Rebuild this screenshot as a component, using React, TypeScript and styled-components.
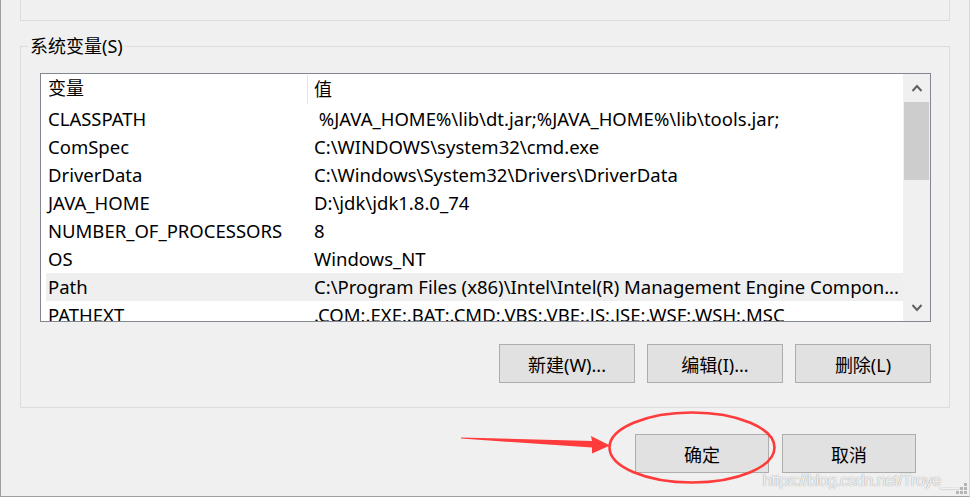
import React from "react";
import styled, { createGlobalStyle } from "styled-components";

const GlobalStyle = createGlobalStyle`
  html, body {
    margin: 0;
    padding: 0;
    background: #f0f0f0;
  }
  body {
    font-family: "Noto Sans", "Noto Sans CJK SC", sans-serif;
  }
`;

const Window = styled.div`
  position: relative;
  width: 970px;
  height: 497px;
  box-sizing: border-box;
  background: #f0f0f0;
  border-left: 1px solid #a0a0a0;
  border-right: 1px solid #dadada;
  border-bottom: 1px solid #a0a0a0;
  padding-left: 19px;
  overflow: hidden;
  display: flex;
  flex-direction: column;
  font-size: 18px;
  color: #000;
`;

const PrevGroup = styled.div`
  width: 930px;
  height: 21px;
  box-sizing: border-box;
  border: 1px solid #dcdcdc;
  border-top: none;
`;

const GroupBox = styled.fieldset`
  width: 930px;
  box-sizing: border-box;
  margin: 14px 0 0 0;
  padding: 0;
  border: 1px solid #dcdcdc;
  min-inline-size: 0;
`;

const Legend = styled.legend`
  margin-left: 7px;
  padding: 0 2px;
  line-height: 22px;
  font-size: 18px;
`;

const GroupBody = styled.div`
  padding: 16px 18px 24px 19px;
  display: flex;
  flex-direction: column;
`;

const ListBox = styled.div`
  width: 891px;
  height: 249px;
  box-sizing: border-box;
  border: 1px solid #828790;
  background: #fff;
  display: flex;
  overflow: hidden;
`;

const ListContent = styled.div`
  flex: 1;
  display: flex;
  flex-direction: column;
  overflow: hidden;
`;

const HeaderRow = styled.div`
  display: grid;
  grid-template-columns: 266px 1fr;
  height: 31px;
  flex-shrink: 0;
  line-height: 31px;
`;

const HeaderCell = styled.div<{ $divider?: boolean }>`
  padding-left: ${(p) => (p.$divider ? "6px" : "7px")};
  border-left: ${(p) => (p.$divider ? "1px solid #e5e5e5" : "none")};
  margin: ${(p) => (p.$divider ? "1px 0 1px 0" : "0")};
  line-height: 29px;
`;

const Row = styled.div<{ $selected?: boolean }>`
  display: grid;
  grid-template-columns: 261px 1fr;
  height: 28px;
  flex-shrink: 0;
  margin-left: 5px;
  line-height: 28px;
  font-size: 18.5px;
  background: ${(p) => (p.$selected ? "#efefef" : "transparent")};
`;

const Cell = styled.div`
  padding-left: 2px;
  white-space: pre;
  overflow: hidden;
`;

const ValueCell = styled.div`
  padding-left: 7px;
  white-space: pre;
  overflow: hidden;
  text-overflow: ellipsis;
`;

const ScrollBar = styled.div`
  width: 27px;
  flex-shrink: 0;
  background: #f0f0f0;
  display: flex;
  flex-direction: column;
`;

const ScrollArrow = styled.div`
  height: 27px;
  display: flex;
  align-items: center;
  justify-content: center;
  flex-shrink: 0;
`;

const ScrollTrack = styled.div`
  flex: 1;
  padding: 1px 1px 0 1px;
`;

const ScrollThumb = styled.div`
  height: 78px;
  background: #cdcdcd;
`;

const ButtonRow = styled.div<{ $gap: number }>`
  display: flex;
  justify-content: flex-end;
  gap: ${(p) => p.$gap}px;
`;

const ListButtons = styled(ButtonRow)`
  margin-top: 22px;
`;

const DialogButtons = styled(ButtonRow)`
  margin-top: 26px;
  padding-right: 53px;
`;

const Button = styled.button<{ $w: number }>`
  width: ${(p) => p.$w}px;
  height: 39px;
  box-sizing: border-box;
  background: #e1e1e1;
  border: 1px solid #adadad;
  border-radius: 0;
  font-family: inherit;
  font-size: 18px;
  color: #000;
  padding: 0;
`;

const Watermark = styled.div`
  position: absolute;
  right: 11px;
  bottom: 5px;
  font-family: "Liberation Sans", Arial, sans-serif;
  font-size: 17px;
  letter-spacing: -0.8px;
  color: rgba(255, 255, 255, 0.9);
  text-shadow: 0 0 1px rgba(110, 110, 110, 0.9);
  pointer-events: none;
`;

const Grip = styled.svg`
  position: absolute;
  right: 1px;
  bottom: 1px;
`;

const Annotation = styled.svg`
  position: absolute;
  left: -1px;
  top: 0;
  pointer-events: none;
`;

const rows: [string, string][] = [
  ["CLASSPATH", " %JAVA_HOME%\\lib\\dt.jar;%JAVA_HOME%\\lib\\tools.jar;"],
  ["ComSpec", "C:\\WINDOWS\\system32\\cmd.exe"],
  ["DriverData", "C:\\Windows\\System32\\Drivers\\DriverData"],
  ["JAVA_HOME", "D:\\jdk\\jdk1.8.0_74"],
  ["NUMBER_OF_PROCESSORS", "8"],
  ["OS", "Windows_NT"],
  ["Path", "C:\\Program Files (x86)\\Intel\\Intel(R) Management Engine Compon..."],
  ["PATHEXT", ".COM;.EXE;.BAT;.CMD;.VBS;.VBE;.JS;.JSE;.WSF;.WSH;.MSC"],
];

const Chevron = ({ up }: { up?: boolean }) => (
  <svg width="12" height="8" viewBox="0 0 12 8">
    <path
      d={up ? "M1.5 7 L6 2 L10.5 7" : "M1.5 1 L6 6 L10.5 1"}
      fill="none"
      stroke="#606060"
      strokeWidth="2"
    />
  </svg>
);

export default function App() {
  return (
    <>
      <GlobalStyle />
      <Window>
        <PrevGroup />
        <GroupBox>
          <Legend>系统变量(S)</Legend>
          <GroupBody>
            <ListBox>
              <ListContent>
                <HeaderRow>
                  <HeaderCell>变量</HeaderCell>
                  <HeaderCell $divider>值</HeaderCell>
                </HeaderRow>
                {rows.map(([name, value]) => (
                  <Row key={name} $selected={name === "Path"}>
                    <Cell>{name}</Cell>
                    <ValueCell>{value}</ValueCell>
                  </Row>
                ))}
              </ListContent>
              <ScrollBar>
                <ScrollArrow>
                  <Chevron up />
                </ScrollArrow>
                <ScrollTrack>
                  <ScrollThumb />
                </ScrollTrack>
                <ScrollArrow>
                  <Chevron />
                </ScrollArrow>
              </ScrollBar>
            </ListBox>
            <ListButtons $gap={12}>
              <Button $w={136}>新建(W)...</Button>
              <Button $w={136}>编辑(I)...</Button>
              <Button $w={136}>删除(L)</Button>
            </ListButtons>
          </GroupBody>
        </GroupBox>
        <DialogButtons $gap={13}>
          <Button $w={134}>确定</Button>
          <Button $w={134}>取消</Button>
        </DialogButtons>

        <Watermark>https://blog.csdn.net/Troye__</Watermark>
        <Grip width="14" height="14" viewBox="0 0 14 14">
          <g fill="#b5b5b5">
            <rect x="10" y="2" width="3" height="3" />
            <rect x="6" y="6" width="3" height="3" />
            <rect x="10" y="6" width="3" height="3" />
            <rect x="2" y="10" width="3" height="3" />
            <rect x="6" y="10" width="3" height="3" />
            <rect x="10" y="10" width="3" height="3" />
          </g>
        </Grip>
        <Annotation width="970" height="497" viewBox="0 0 970 497">
          <polygon
            points="461,437.4 592,441 591,436 610,445.5 592,453.5 592,447.5 461,438.6"
            fill="#ff3b3b"
          />
          <ellipse
            cx="692"
            cy="447.5"
            rx="82.5"
            ry="35"
            fill="none"
            stroke="#ff3b3b"
            strokeWidth="2.6"
          />
        </Annotation>
      </Window>
    </>
  );
}
